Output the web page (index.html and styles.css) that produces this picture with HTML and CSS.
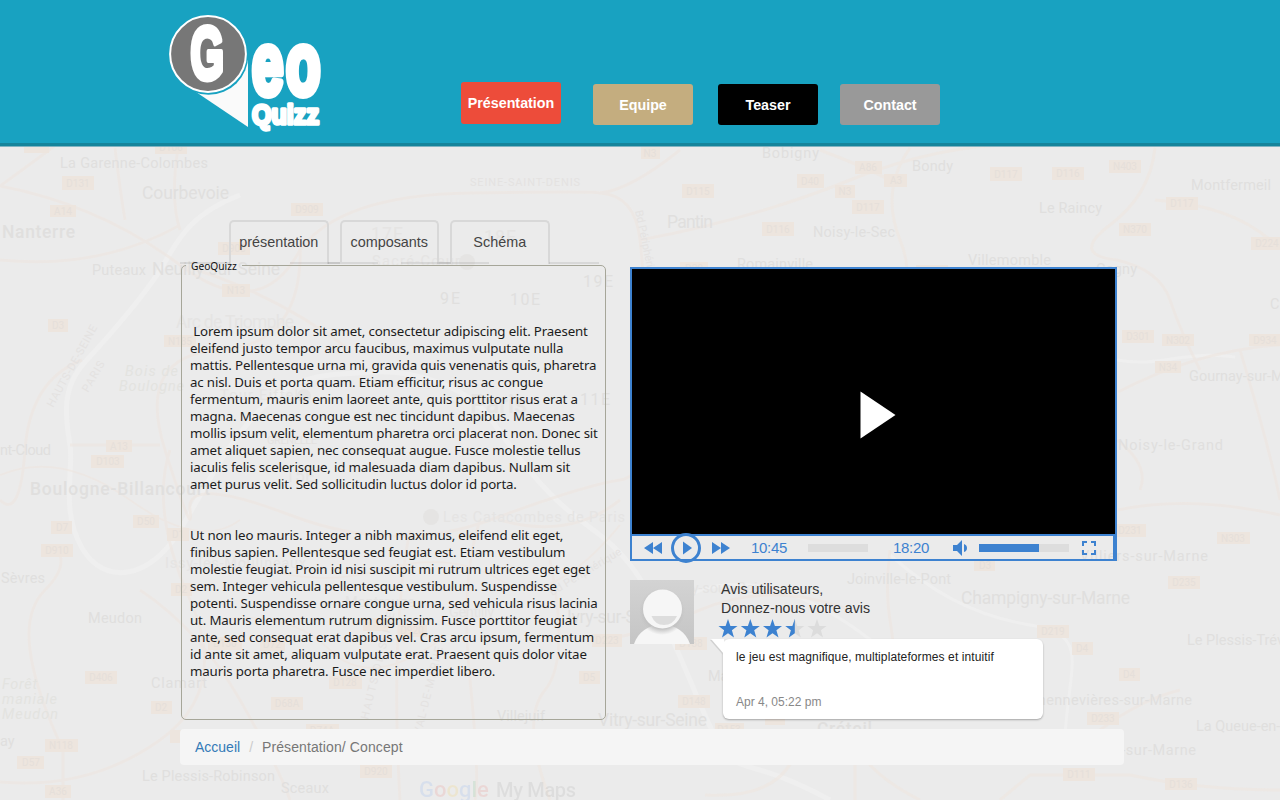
FILE: index.html
```html
<!DOCTYPE html>
<html lang="fr">
<head>
<meta charset="utf-8">
<title>GeoQuizz</title>
<link rel="stylesheet" href="styles.css">
</head>
<body>
<svg class="map" width="1280" height="800" viewBox="0 0 1280 800" aria-hidden="true">
  <g class="river">
    <path d="M240 195C195 212 180 235 165 262S110 335 85 362S66 420 70 445S60 510 82 548S150 580 180 530S220 455 255 415S320 375 370 372S470 390 490 418S540 490 580 520S640 560 690 680S720 740 830 800"/>
    <path d="M1117 360C1160 368 1180 350 1235 357M890 555C930 590 970 615 1030 625S1070 660 1065 735M680 635C660 610 690 580 750 585S880 640 910 680" stroke-width="3"/>
  </g>
  <g class="road">
    <path d="M0 186Q100 205 180 265T300 250Q340 195 470 193T600 193Q635 195 640 240T650 380T620 480T490 520T290 515T190 510T165 450T220 350T300 240"/>
    <path d="M0 186Q50 150 75 130M0 260Q100 270 180 225M180 265Q270 290 350 350M115 148Q120 190 125 220M178 148Q170 200 180 230M70 445H160M60 555Q65 570 45 590T30 650T63 750V800M0 782Q90 790 160 740T190 600T170 450M82 360Q30 380 25 450T0 500"/>
    <path d="M600 193Q630 190 680 150M640 240Q750 220 850 180T1040 145M910 148Q880 190 900 240T880 290M820 150Q860 165 890 180M1155 148Q1150 195 1110 225T1117 260Q1160 270 1170 300T1200 370M1155 200Q1230 205 1270 240M1118 392Q1200 350 1280 345M1118 510Q1190 495 1280 515M1240 350Q1270 450 1280 500M1117 440Q1150 465 1140 490"/>
    <path d="M890 550Q885 590 890 620T895 680M850 610Q770 580 700 610T590 640M480 520Q460 580 470 680T475 800M550 560Q570 660 545 690T550 800M850 730Q860 770 920 800M855 765V800M800 730Q795 800 705 795M1000 800L1030 775H1130Q1200 790 1280 790M1100 730Q1140 700 1180 690M500 520Q570 540 620 500M410 530Q390 630 400 800M140 590Q200 630 240 700T290 800"/>
    <path d="M240 560Q310 590 380 570T500 580T620 525M220 620Q290 610 330 650T440 640M0 475Q60 450 130 500T240 520" stroke-width="2"/>
  </g>
  <g class="badge">
    <path d="M155 141h32v13h-32zM62 176h32v14h-32zM24 141h25v12h-25zM50 205h26v12h-26zM48 319h20v13h-20zM218 242h32v13h-32zM291 203h32v13h-32zM222 284h28v13h-28zM164 335h32v12h-32zM106 440h26v12h-26zM91 455h33v13h-33zM133 515h26v13h-26zM51 521h21v13h-21zM41 544h32v13h-32zM167 528h22v13h-22zM171 583h21v13h-21zM85 671h32v13h-32zM151 701h21v13h-21zM170 730h21v13h-21zM45 739h33v13h-33zM17 756h27v13h-27zM45 785h26v13h-26zM208 637h34v13h-34zM260 638h25v13h-25zM398 624h29v13h-29zM363 618h25v13h-25zM329 676h33v13h-33zM271 697h32v13h-32zM306 724h33v13h-33zM360 765h32v13h-32zM592 634h30v13h-30zM579 671h21v13h-21z"/>
    <path d="M678 695h32v13h-32zM675 637h32v13h-32zM715 723h29v13h-29zM765 713h20v12h-20zM1087 712h32v13h-32zM1072 642h21v13h-21zM1119 668h21v13h-21zM1037 625h32v13h-32zM1063 768h32v13h-32zM1052 167h32v13h-32zM1109 160h32v13h-32zM1166 197h32v13h-32zM1119 223h32v13h-32zM1251 237h32v13h-32zM1122 330h32v13h-32zM1162 334h32v12h-32zM1249 334h31v12h-31zM1155 361h26v12h-26zM1114 524h32v13h-32zM1217 532h33v12h-33zM1168 576h32v13h-32zM1165 778h32v12h-32zM641 147h19v12h-19zM682 184h32v14h-32zM762 222h32v14h-32zM797 174h27v14h-27zM855 161h27v13h-27zM835 185h20v13h-20zM884 174h23v13h-23zM852 200h32v14h-32zM990 167h32v14h-32zM680 262h28v13h-28zM916 265h32v13h-32zM974 559h21v12h-21z"/>
  </g>
  <g class="badge-text">
    <text x="171" y="151">D106</text><text x="78" y="187">D131</text><text x="63" y="215">A14</text><text x="58" y="329">D3</text><text x="234" y="252">D908</text><text x="307" y="213">D909</text><text x="236" y="294">N13</text><text x="180" y="345">N185</text><text x="119" y="450">A13</text><text x="108" y="465">D103</text><text x="146" y="525">D50</text><text x="62" y="531">D7</text><text x="57" y="554">D910</text><text x="178" y="538">D1</text><text x="181" y="593">D2</text><text x="101" y="681">D406</text><text x="161" y="711">D2</text><text x="61" y="749">N118</text><text x="31" y="766">D57</text><text x="58" y="795">A36</text><text x="225" y="647">D130</text><text x="272" y="648">D72</text><text x="412" y="634">D920</text><text x="345" y="686">D128</text><text x="287" y="707">D68A</text><text x="322" y="734">D74A</text><text x="376" y="775">D920</text><text x="607" y="644">D223</text><text x="589" y="681">D5</text>
    <text x="694" y="705">D148</text><text x="691" y="647">D138</text><text x="729" y="733">D153</text><text x="1103" y="722">D233</text><text x="1082" y="652">D4</text><text x="1129" y="678">D4</text><text x="1053" y="635">D219</text><text x="1079" y="778">D111</text><text x="1068" y="177">D116</text><text x="1125" y="170">N403</text><text x="1182" y="207">D117</text><text x="1135" y="233">N370</text><text x="1267" y="247">D224</text><text x="1138" y="340">D301</text><text x="1178" y="344">N302</text><text x="1265" y="344">D934</text><text x="1168" y="371">N34</text><text x="1130" y="534">D231</text><text x="1233" y="542">N303</text><text x="1184" y="586">D235</text><text x="1181" y="788">D136</text><text x="650" y="157">N3</text><text x="698" y="195">D115</text><text x="778" y="233">D116</text><text x="810" y="185">D40</text><text x="868" y="171">A86</text><text x="845" y="195">N3</text><text x="896" y="184">A3</text><text x="868" y="211">D117</text><text x="1006" y="178">D117</text><text x="694" y="272">D20</text><text x="932" y="275">D116</text><text x="985" y="569">D3</text>
  </g>
  <g class="places">
    <text x="60" y="168" textLength="148">La Garenne-Colombes</text>
    <text x="142" y="199" textLength="87" class="l">Courbevoie</text>
    <text x="2" y="238" textLength="73" class="l b">Nanterre</text>
    <text x="92" y="275" textLength="54">Puteaux</text>
    <text x="152" y="275" textLength="128" class="l">Neuilly-sur-Seine</text>
    <text x="176" y="328" textLength="118" class="l f">Arc de Triomphe</text>
    <text x="125" y="376" textLength="53" class="i">Bois de</text>
    <text x="119" y="391" textLength="65" class="i">Boulogne</text>
    <text x="53" y="408" textLength="92" class="s" transform="rotate(-61 53 408)">HAUTS-DE-SEINE</text>
    <text x="88" y="393" textLength="34" class="s" transform="rotate(-60 88 393)">PARIS</text>
    <text x="0" y="455" textLength="51">nt-Cloud</text>
    <text x="30" y="495" textLength="180" class="l b">Boulogne-Billancourt</text>
    <text x="1" y="583" textLength="44">Sèvres</text>
    <text x="88" y="623" textLength="54">Meudon</text>
    <text x="151" y="688" textLength="56">Clamart</text>
    <text x="2" y="689" textLength="35" class="i">Forêt</text><text x="2" y="704" textLength="55" class="i">maniale</text><text x="2" y="719" textLength="56" class="i">Meudon</text>
    <text x="0" y="746">ay</text>
    <text x="165" y="568" textLength="141" class="f">Issy-les-Moulineaux</text>
    <text x="142" y="781" textLength="133">Le Plessis-Robinson</text>
    <text x="281" y="793" textLength="48">Sceaux</text>
    <text x="345" y="607" textLength="70" class="f">Montrouge</text>
    <text x="449" y="617" textLength="45" class="f">Gentilly</text>
    <text x="567" y="623" textLength="100" class="l">Ivry-sur-Seine</text>
    <text x="598" y="726" textLength="109" class="l">Vitry-sur-Seine</text>
    <text x="497" y="721" textLength="48">Villejuif</text>
    <text x="817" y="735" textLength="55" class="l b">Créteil</text>
    <text x="708" y="681" textLength="95">Maisons-Alfort</text>
    <text x="847" y="584" textLength="104">Joinville-le-Pont</text>
    <text x="640" y="593" textLength="125" class="f">Fontenay-sous-Bois</text>
    <text x="961" y="604" textLength="169" class="l">Champigny-sur-Marne</text>
    <text x="1028" y="705" textLength="164">Chennevières-sur-Marne</text>
    <text x="1050" y="755" textLength="146">Ormesson-sur-Marne</text>
    <text x="1196" y="731">La Queue-en-B</text>
    <text x="1187" y="645">Le Plessis-Trév</text>
    <text x="1080" y="561" textLength="128">Villiers-sur-Marne</text>
    <text x="1118" y="450" textLength="105">Noisy-le-Grand</text>
    <text x="1189" y="381">Gournay-sur-M</text>
    <text x="1191" y="190" textLength="80">Montfermeil</text>
    <text x="1039" y="213" textLength="63">Le Raincy</text>
    <text x="1096" y="274" textLength="41">Gagny</text>
    <text x="1270" y="309">C</text>
    <text x="968" y="265" textLength="83">Villemomble</text>
    <text x="737" y="269" textLength="76">Romainville</text>
    <text x="813" y="237" textLength="82">Noisy-le-Sec</text>
    <text x="667" y="228" textLength="46" class="l">Pantin</text>
    <text x="762" y="158" textLength="57">Bobigny</text>
    <text x="912" y="171" textLength="41">Bondy</text>
    <g class="f"><text x="371" y="240" textLength="32" class="l">17E</text><text x="484" y="243" textLength="32" class="l">18E</text><text x="285" y="482" textLength="30" class="l">15E</text>
    <text x="470" y="413" textLength="57" class="xl">Paris</text>
    <text x="220" y="400" textLength="78">Tour Eiffel</text>
    <text x="372" y="266" textLength="88">Sacré-Cœur</text>
    <text x="443" y="522" textLength="182">Les Catacombes de Paris</text>
    <circle cx="431" cy="517" r="8"/><circle cx="304" cy="396" r="7"/><circle cx="467" cy="262" r="8"/></g>
    <text x="583" y="287" textLength="30" class="m">19E</text><text x="440" y="304" textLength="20" class="m">9E</text><text x="510" y="305" textLength="30" class="m">10E</text><text x="580" y="405" textLength="30" class="m">11E</text>
    <text x="470" y="186" textLength="110" class="s">SEINE-SAINT-DENIS</text>
    <text x="267" y="444" textLength="50" class="s">GRENELLE</text>
    <text x="368" y="720" textLength="110" class="s" transform="rotate(-76 368 720)">HAUTS-DE-SEINE</text>
    <text x="421" y="735" textLength="90" class="s" transform="rotate(-76 421 735)">VAL-DE-MARNE</text>
    <text x="552" y="596" textLength="82" class="s" transform="rotate(-31 552 596)">Bd Périphérique</text>
    <text x="635" y="211" textLength="76" class="s" transform="rotate(78 635 211)">Bd Périphérique</text>
  </g>
  <g class="google"><text x="419" y="797" class="g"><tspan fill="#4285f4">G</tspan><tspan fill="#ea4335">o</tspan><tspan fill="#fbbc05">o</tspan><tspan fill="#4285f4">g</tspan><tspan fill="#34a853">l</tspan><tspan fill="#ea4335">e</tspan></text><text x="496" y="797" textLength="80" fill="#777">My Maps</text></g>
</svg>

<header class="header">
  <svg class="logo" width="156" height="120" viewBox="0 0 156 120" role="img" aria-label="GeoQuizz">
    <path d="M28 78L80 113V46Z" fill="#fafafa"/>
    <circle cx="40.500" cy="41" r="39.800" fill="#18a2c1"/>
    <circle cx="40" cy="40" r="37.900" fill="#777" stroke="#fff" stroke-width="2"/>
    <text class="impact" transform="translate(22.500 65) scale(.58 1)" font-size="74" stroke-width="6">G</text>
    <text class="impact" transform="translate(84 80) scale(.64 1)" font-size="88" stroke-width="8" textLength="107" lengthAdjust="spacing">eo</text>
    <text class="impact" transform="translate(84 110) scale(.72 1)" font-size="28.500" stroke-width="3.500" textLength="93" lengthAdjust="spacingAndGlyphs">Quizz</text>
  </svg>
  <nav class="nav">
    <a class="btn red">Présentation</a>
    <a class="btn tan">Equipe</a>
    <a class="btn black">Teaser</a>
    <a class="btn grey">Contact</a>
  </nav>
</header>

<main class="page">
  <div class="columns">
    <section class="left">
      <div class="tabs"><a class="tab">présentation</a><a class="tab">composants</a><a class="tab">Schéma</a></div>
      <fieldset class="panel">
        <legend>GeoQuizz</legend>
        <p>&nbsp;Lorem ipsum dolor sit amet, consectetur adipiscing elit. Praesent<br>eleifend justo tempor arcu faucibus, maximus vulputate nulla<br>mattis. Pellentesque urna mi, gravida quis venenatis quis, pharetra<br>ac nisl. Duis et porta quam. Etiam efficitur, risus ac congue<br>fermentum, mauris enim laoreet ante, quis porttitor risus erat a<br>magna. Maecenas congue est nec tincidunt dapibus. Maecenas<br>mollis ipsum velit, elementum pharetra orci placerat non. Donec sit<br>amet aliquet sapien, nec consequat augue. Fusce molestie tellus<br>iaculis felis scelerisque, id malesuada diam dapibus. Nullam sit<br>amet purus velit. Sed sollicitudin luctus dolor id porta.</p>
        <p>Ut non leo mauris. Integer a nibh maximus, eleifend elit eget,<br>finibus sapien. Pellentesque sed feugiat est. Etiam vestibulum<br>molestie feugiat. Proin id nisi suscipit mi rutrum ultrices eget eget<br>sem. Integer vehicula pellentesque vestibulum. Suspendisse<br>potenti. Suspendisse ornare congue urna, sed vehicula risus lacinia<br>ut. Mauris elementum rutrum dignissim. Fusce porttitor feugiat<br>ante, sed consequat erat dapibus vel. Cras arcu ipsum, fermentum<br>id ante sit amet, aliquam vulputate erat. Praesent quis dolor vitae<br>mauris porta pharetra. Fusce nec imperdiet libero.</p>
      </fieldset>
    </section>

    <section class="right">
      <div class="player">
        <div class="screen"><svg width="36" height="48" viewBox="0 0 36 48"><path d="M.5.500L35.500 24L.5 47.500Z" fill="#fff"/></svg></div>
        <div class="controls">
          <svg class="rew" width="18" height="12" viewBox="0 0 18 12"><path d="M9 0V12L0 6ZM18 0V12L9 6Z"/></svg>
          <svg class="play" width="30" height="30" viewBox="0 0 30 30"><circle cx="15" cy="15" r="13.500"/><path d="M12 8.500V21.500L21 15Z"/></svg>
          <svg class="ff" width="18" height="12" viewBox="0 0 18 12"><path d="M0 0V12L9 6ZM9 0V12L18 6Z"/></svg>
          <span class="time">10:45</span>
          <span class="bar progress"></span>
          <span class="time total">18:20</span>
          <svg class="vol" width="15" height="16" viewBox="0 0 15 16"><path d="M0 5H4L9 0V16L4 11H0ZM11 4Q14 5 14 8T11 12Z"/></svg>
          <span class="bar volume"><i></i></span>
          <svg class="full" width="14" height="14" viewBox="0 0 14 14"><path d="M1 5V1H5M9 1H13V5M13 9V13H9M5 13H1V9" /></svg>
        </div>
      </div>
      <div class="review">
        <svg class="avatar" width="64" height="64" viewBox="0 0 64 64">
          <defs>
            <linearGradient id="bg" x2="0" y2="1"><stop stop-color="#d3d3d3"/><stop offset="1" stop-color="#c5c5c5"/></linearGradient>
            <radialGradient id="sh"><stop offset=".75" stop-color="#888" stop-opacity=".45"/><stop offset="1" stop-color="#999" stop-opacity="0"/></radialGradient>
            <clipPath id="body"><path d="M4 64C8 52 18 45 32 45S56 52 60 64Z"/></clipPath>
          </defs>
          <path fill="url(#bg)" d="M0 0H64V64H0Z"/><circle cx="32" cy="31" r="23" fill="url(#sh)" opacity=".35"/>
          <path d="M4 64C8 52 18 45 32 45S56 52 60 64Z" fill="#f6f6f6"/>
          <circle cx="32" cy="31" r="24" fill="url(#sh)" clip-path="url(#body)"/>
          <circle cx="32.500" cy="29" r="19.500" fill="#f6f6f6"/><path d="M21.500 36H47Q43 45 34 45T21.500 36Z" fill="#ddd"/>
        </svg>
        <div class="opinion">
          <p class="ask">Avis utilisateurs,<br>Donnez-nous votre avis</p>
          <svg class="stars" width="112" height="20" viewBox="0 0 112 20">
            <defs><path id="star" d="M10 0L12.400 6.900H19.500L13.900 11.300L16 18.500L10 14.300L4 18.500L6.100 11.300L.5 6.900H7.600Z"/><clipPath id="half"><path d="M0 0H10V20H0Z"/></clipPath></defs>
            <g fill="#3d82d0"><use href="#star"/><use href="#star" x="22.300"/><use href="#star" x="44.500"/></g>
            <g fill="#dcdcdc"><use href="#star" x="66.800"/><use href="#star" x="89"/></g>
            <g transform="translate(66.800)"><use href="#star" clip-path="url(#half)" fill="#3d82d0"/></g>
          </svg>
          <div class="bubble">
            <svg class="tail" width="13" height="16" viewBox="0 0 13 16"><path d="M0 0H13V15Z"/></svg>
            <p>le jeu est magnifique, multiplateformes et intuitif</p>
            <time>Apr 4, 05:22 pm</time>
          </div>
        </div>
      </div>
    </section>
  </div>
  <div class="crumbs"><a>Accueil</a><span class="sep">/</span><span class="here">Présentation/ Concept</span></div>
</main>
</body>
</html>
```
FILE: styles.css
```css
* { box-sizing: border-box; }
body { margin: 0; width: 1280px; height: 800px; overflow: hidden; position: relative; background: #ebebeb; font: 14px/20px "Liberation Sans", Arial, sans-serif; color: #333; }
p { margin: 0; }
svg { display: block; flex: none; }

/* Washed-out city map behind the page */
.map { position: absolute; left: 0; top: 0; z-index: -1; }
.river { fill: none; stroke: #efefef; stroke-width: 5; }
.road { fill: none; stroke: #eee6e0; stroke-width: 3; opacity: .6; }
.badge { fill: #ede5de; }
.badge-text { font: 10px Roboto, sans-serif; text-anchor: middle; fill: #e5dfda; }
.places { font: 14.500px Roboto, sans-serif; fill: #e0dfde; }
.places .l { font-size: 17.500px; }
.places .m { font-size: 16px; }
.places .xl { font-size: 25px; font-weight: 500; }
.places .b { font-weight: 500; }
.places .i { font-style: italic; fill: #e3e3e0; }
.places .s { font-size: 11px; fill: #e4e2e1; }
.places .f { fill: #e5e4e3; }
.google { font: 500 20px Roboto, sans-serif; opacity: .11; }
.google .g { font-size: 22px; }

.header { height: 147px; display: flex; background: #18a2c1; border-bottom: 1px solid #7fb4c2; box-shadow: inset 0 -3px #15849b; padding-left: 168px; }
.logo { margin-top: 14px; }
.impact { font-family: "Liberation Sans", Arial, sans-serif; font-weight: 700; fill: #fff; stroke: #fff; stroke-linejoin: round; }
.nav { display: flex; align-items: flex-start; padding: 84px 0 0 137px; }
.btn { width: 100px; height: 41px; border-radius: 3px; color: #fff; font-weight: 700; font-size: 14.300px; line-height: 42px; text-align: center; }
.red { background: #ed4c3a; margin: -2px 32px 0 0; height: 42px; }
.tan { background: #c4ad7f; margin-right: 25px; }
.black { background: #000; margin-right: 22px; }
.grey { background: #999; }

.page { width: 944px; margin: 0 0 0 180px; padding-top: 73px; }
.columns { display: flex; height: 509px; }
.left { width: 426px; margin-right: 24px; }
.tabs { display: flex; gap: 11px; padding-left: 49px; height: 44px; }
.tab { position: relative; width: 99.500px; height: 44px; border: 2px solid #d8d8d8; border-bottom: 0; border-radius: 5px 5px 0 0; font-size: 14.400px; line-height: 41px; text-align: center; color: #444; }
.tab::before, .tab::after { content: ""; position: absolute; bottom: 0; width: 50px; height: 2px; background: rgba(0, 0, 0, .08); }
.tab::before { right: 97px; }
.tab::after { left: 97px; }
.panel { margin: -4px 0 0 1px; width: 425px; height: 460px; min-width: 0; border: 1px solid #a6a699; border-radius: 5px; padding: 52px 0 0 8px; font: 13.300px/17px "Noto Sans", "Open Sans", sans-serif; color: #1c1c1c; white-space: nowrap; }
.panel legend { font-size: 10.200px; line-height: 10px; padding: 1px 5px 0 5px; margin-left: -4px; color: #111; }
.panel p { letter-spacing: -.16px; }
.panel p + p { margin-top: 34px; }

.right { width: 494px; padding-top: 47px; }
.player { width: 487px; height: 294px; border: 2px solid #3d82d0; }
.screen { height: 265px; background: #000; display: flex; padding: 122px 0 0 228px; }
.controls { height: 27px; margin-bottom: -2px; display: flex; align-items: center; border: 2px solid #3d82d0; border-left: 0; color: #3d82d0; fill: #3d82d0; padding-left: 12px; }
.play { margin: 0 11px 0 9px; }
.play circle { fill: none; stroke: #3d82d0; stroke-width: 3; }
.time { width: 38px; margin-left: 21px; font-size: 15px; letter-spacing: -.3px; line-height: 20px; padding-top: 1px; }
.bar { width: 60px; height: 8px; background: #ddd; margin-left: 19px; }
.total { margin-left: 25px; }
.vol { margin-left: 22px; }
.volume { width: 90px; margin-left: 11px; }
.volume i { display: block; width: 60px; height: 8px; background: #3d82d0; }
.full { margin-left: 13px; }
.full path { fill: none; stroke: #3d82d0; stroke-width: 2; }

.review { display: flex; margin-top: 19px; gap: 24px; }
.opinion { width: 325px; }
.ask { padding-left: 3px; line-height: 19px; font-size: 14.200px; }
.stars { height: 20px; margin-top: 1px; }
.bubble { position: relative; width: 320px; height: 80px; margin-left: 5px; border-radius: 6px; background: #fff; box-shadow: 0 1px 2px rgba(0, 0, 0, .3); padding: 10px 13px; font-size: 12px; line-height: 16px; color: #222; }
.bubble p { letter-spacing: .1px; }
.tail { position: absolute; left: -12px; top: 0; fill: #fff; filter: drop-shadow(-1px 1px 0 #d0d0d0); }
.bubble time { display: block; margin-top: 29px; color: #888; }

.crumbs { height: 36px; border-radius: 4px; background: #f5f5f5; padding: 8px 15px; color: #777; }
.crumbs a { color: #337ab7; }
.crumbs .sep { color: #ccc; padding: 0 9px; }
.crumbs .here { letter-spacing: .1px; }
```
